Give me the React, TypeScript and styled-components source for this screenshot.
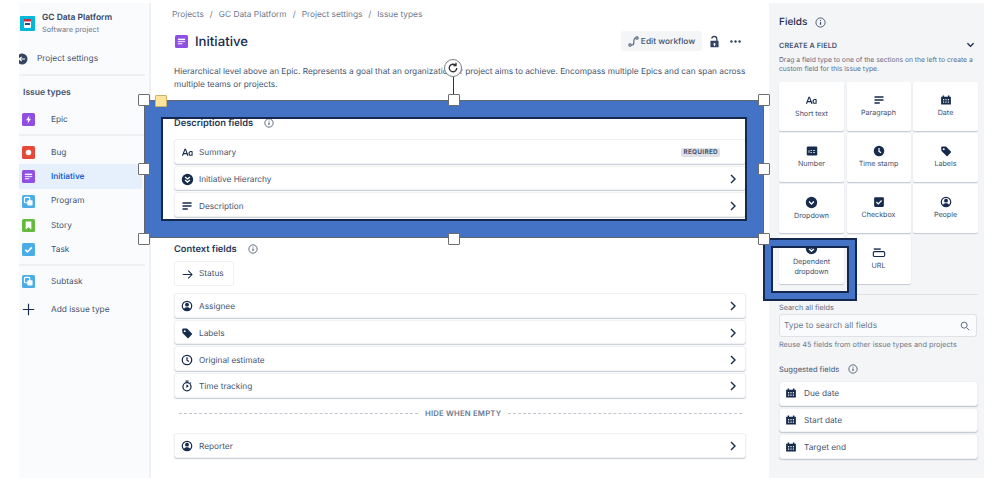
import React from "react";
import styled, { createGlobalStyle } from "styled-components";

const navy = "#172b4d";
const Global = createGlobalStyle`
  html, body { margin: 0; padding: 0; background: #fff; }
  body { font-family: Inter, "Noto Sans", "Liberation Sans", sans-serif; color: ${navy}; text-rendering: geometricPrecision; }
  * { box-sizing: border-box; }
`;

const Page = styled.div`
  position: relative; width: 998px; height: 488px; overflow: hidden;
  display: flex; align-items: flex-start; padding: 3px 0 0 19px;
`;
const Sidebar = styled.aside`
  width: 132px; height: 475px; background: #fafbfc; border-right: 2px solid #eff0f3;
  display: flex; flex-direction: column;
`;
const ProjectHead = styled.div`display: flex; align-items: center; gap: 7px; padding: 3px 0 0 1px; height: 37px;`;
const ProjectText = styled.div`display: flex; flex-direction: column; gap: 1px; margin-top: 2px;`;
const ProjectName = styled.div`font-size: 8.45px; font-weight: 600; color: #344563; line-height: 11px;`;
const ProjectSub = styled.div`font-size: 7.3px; color: #6b778c; line-height: 10px;`;
const BackRow = styled.div`display: flex; align-items: center; gap: 9px; height: 20px; margin-top: 8px; padding-top: 1px; font-size: 8.35px; color: #42526e;`;
const Divider = styled.div<{ $top?: number; $bottom?: number }>`
  height: 2px; width: 126px; background: #eff0f3; flex: none;
  margin-top: ${p => p.$top ?? 0}px; margin-bottom: ${p => p.$bottom ?? 0}px;
`;
const SideHeading = styled.div`font-size: 8.6px; font-weight: 600; color: #42526e; padding-left: 4px; height: 14px; line-height: 14px; margin: 10px 0 7px;`;
const SideRow = styled.div<{ $active?: boolean; $h?: number }>`
  display: flex; align-items: center; width: 123px; height: ${p => p.$h ?? 24.3}px; padding: 1px 0 0 3px; flex: none;
  font-size: 8.3px; color: ${p => p.$active ? "#0052cc" : "#42526e"};
  font-weight: ${p => p.$active ? 500 : 400};
  background: ${p => p.$active ? "#e6effc" : "transparent"};
  & > svg { margin-right: 16px; flex: none; }
`;

const Main = styled.main`width: 618px; height: 475px; padding: 0 23px; flex: none;`;
const Crumbs = styled.div`height: 22px; display: flex; align-items: center; gap: 6px; padding-top: 1px; font-size: 8.3px; color: #6b778c; margin-left: -2px;`;
const TitleRow = styled.div`display: flex; align-items: center; height: 20px; margin-top: 6px; padding-left: 1px;`;
const Title = styled.h1`margin: 1px 0 0 7px; font-size: 13.2px; font-weight: 500; color: ${navy}; flex: 1;`;
const EditButton = styled.div`
  height: 20px; width: 81px; background: #f4f5f7; border-radius: 3px; display: flex; align-items: center; justify-content: center; gap: 2px;
  padding-top: 1px; font-size: 8.35px; font-weight: 500; color: #42526e;
`;
const Tools = styled.div`display: flex; align-items: center; gap: 8.5px; margin: 0 4px 0 5.5px;`;
const Desc = styled.p`margin: 14px 0 0; font-size: 8.27px; line-height: 13px; color: #42526e; white-space: nowrap;`;
const SectionHead = styled.div<{ $top: number }>`
  display: flex; align-items: center; gap: 11px; height: 20px; margin-top: ${p => p.$top}px; padding-top: 2px;
  font-size: 9.3px; font-weight: 600; color: #253858;
`;
const Rows = styled.div<{ $top: number }>`display: flex; flex-direction: column; gap: 2px; margin-top: ${p => p.$top}px;`;
const FieldRow = styled.div`
  height: 24.7px; background: #fff; border-radius: 3px; border: 1px solid #f0f1f4; box-shadow: 0 1px 1px rgba(9,30,66,.22);
  display: flex; align-items: center; padding: 2px 8px 0 0; font-size: 8.25px; color: #42526e;
`;
const RowIcon = styled.span`width: 24px; display: flex; justify-content: center; flex: none;`;
const RowLabel = styled.span`flex: 1;`;
const Required = styled.span`
  background: #dfe1e6; color: #42526e; font-size: 6.4px; font-weight: 700; letter-spacing: .3px; border-radius: 2px;
  padding: 1px 2px; margin-right: 17px; line-height: 7px;
`;
const StatusBox = styled.div`
  width: 60px; height: 25px; margin-top: 3px; border: 1px solid #f0f1f4; border-radius: 3px; display: flex; align-items: center;
  gap: 6px; padding: 1px 0 0 7px; font-size: 8.3px; color: #42526e;
`;
const HideRow = styled.div`display: flex; align-items: center; gap: 7px; height: 12px; margin: 9px 4px 14px 5px; padding-top: 1px; font-size: 7.7px; font-weight: 600; color: #6b778c; letter-spacing: .2px;`;
const Dash = styled.div<{ $w?: number }>`
  flex: ${p => p.$w ? `0 0 ${p.$w}px` : 1}; border-top: 1px dashed #c1c7d0;
`;

const Panel = styled.section`width: 215px; height: 475px; background: #f4f5f7; padding: 0 6px 0 10px; flex: none;`;
const PanelTitle = styled.div`display: flex; align-items: center; gap: 8px; height: 16px; margin-top: 11px; font-size: 10px; font-weight: 500; color: #172b4d;`;
const CreateRow = styled.div`display: flex; align-items: center; justify-content: space-between; height: 12px; margin-top: 9px; padding-right: 3px; font-size: 7.2px; font-weight: 600; color: #42526e; letter-spacing: .1px;`;
const PanelNote = styled.div`margin-top: 5px; font-size: 6.76px; line-height: 8.5px; color: #5e6c84; white-space: nowrap;`;
const Tiles = styled.div`display: grid; grid-template-columns: 65px 64px 65px; grid-auto-rows: 49px; gap: 2px 2.5px; margin-top: 9px;`;
const Tile = styled.div<{ $tall?: boolean }>`
  background: #fff; border-radius: 2px; box-shadow: 0 1px 1px rgba(9,30,66,.2);
  display: flex; flex-direction: column; align-items: center; justify-content: flex-start; padding-top: ${p => p.$tall ? 7 : 12}px;
  font-size: 7.15px; line-height: 10px; color: #42526e; text-align: center; white-space: pre-line;
  & > svg { margin-bottom: 2px; flex: none; }
`;
const PanelRule = styled.div`height: 1px; background: #dfe1e6; margin-top: 10px;`;
const SearchLabel = styled.div`font-size: 7.3px; color: #5e6c84; margin-top: 8px; line-height: 10px;`;
const SearchBox = styled.div`
  height: 23px; margin-top: 1px; width: 198px; background: #fafbfc; border: 1px solid #dfe1e6; border-radius: 3px;
  display: flex; align-items: center; justify-content: space-between; padding: 0 6px 0 4px; font-size: 8.3px; color: #6b778c;
`;
const SearchHint = styled.div`font-size: 7.3px; color: #6b778c; margin-top: 3px; line-height: 10px;`;
const SuggestHead = styled.div`display: flex; align-items: center; gap: 9px; height: 12px; margin-top: 13px; font-size: 7.5px; font-weight: 500; color: #5e6c84;`;
const SuggestRows = styled.div`display: flex; flex-direction: column; gap: 2px; margin-top: 6px;`;
const SuggestRow = styled.div`
  height: 24.7px; background: #fff; border-radius: 3px; box-shadow: 0 1px 1px rgba(9,30,66,.22); border: 1px solid #f0f1f4;
  display: flex; align-items: center; gap: 7px; padding: 0 0 0 5px; font-size: 8.25px; color: #42526e;
`;

const Frame = styled.div<{ $x: number; $y: number; $w: number; $h: number; $b: number; $edge: string; $edgeW: number }>`
  position: absolute; left: ${p => p.$x}px; top: ${p => p.$y}px; width: ${p => p.$w}px; height: ${p => p.$h}px;
  border: ${p => p.$b}px solid #4472c4;
  outline: ${p => p.$edgeW}px solid ${p => p.$edge};
  outline-offset: ${p => -p.$edgeW}px;
`;
const FrameHole = styled.div`position: absolute; inset: 0; border: 2px solid #14284f;`;
const Handle = styled.div<{ $x: number; $y: number; $yellow?: boolean }>`
  position: absolute; left: ${p => p.$x}px; top: ${p => p.$y}px; width: 12px; height: 12px; border-radius: 1px;
  background: ${p => p.$yellow ? "#ffe49b" : "#fff"}; border: 1px solid ${p => p.$yellow ? "#c9b26c" : "#6d6d6d"};
`;
const RotateStem = styled.div`position: absolute; left: 453px; top: 76px; width: 1px; height: 19px; background: #333;`;
const RotateKnob = styled.div`
  position: absolute; left: 444px; top: 59px; width: 18px; height: 18px; border-radius: 50%; background: #fff; border: 1px solid #808080;
  display: flex; align-items: center; justify-content: center;
`;

/* ---------- icons ---------- */
const Svg = ({ s = 12, v = 16, c = navy, children }: { s?: number; v?: number; c?: string; children: React.ReactNode }) => (
  <svg width={s} height={s} viewBox={`0 0 ${v} ${v}`} fill={c}>{children}</svg>
);
const TypeIcon = ({ bg, children, s = 13 }: { bg: string; children: React.ReactNode; s?: number }) => (
  <svg width={s} height={s} viewBox="0 0 16 16">
    <rect width="16" height="16" rx="2" fill={bg} />
    {children}
  </svg>
);
const Epic = () => <TypeIcon bg="#904ee2"><path d="M9 3 5 9h2.5L7 13l4-6H8.5z" fill="#fff" /></TypeIcon>;
const Bug = () => <TypeIcon bg="#e5493a"><circle cx="8" cy="8" r="3.4" fill="#fff" /></TypeIcon>;
const InitIcon = ({ s = 13 }: { s?: number }) => (
  <TypeIcon bg="#904ee2" s={s}><rect x="3.5" y="4.5" width="9" height="1.6" fill="#fff" /><rect x="3.5" y="7.2" width="9" height="1.6" fill="#e6d6fa" /><rect x="3.5" y="9.9" width="5.5" height="1.6" fill="#e6d6fa" /></TypeIcon>
);
const Program = () => <TypeIcon bg="#4bade8"><rect x="3" y="3" width="6.5" height="6.5" rx="1" fill="none" stroke="#fff" strokeWidth="1.4" /><rect x="6.5" y="6.5" width="6.5" height="6.5" rx="1" fill="#fff" /></TypeIcon>;
const Story = () => <TypeIcon bg="#63ba3c"><path d="M4.5 3h7v10L8 10.2 4.5 13z" fill="#fff" /></TypeIcon>;
const Task = () => <TypeIcon bg="#4bade8"><path d="m4 8.3 2.7 2.7L12 5.4" fill="none" stroke="#fff" strokeWidth="2" /></TypeIcon>;

const Chevron = () => <svg width="8" height="10" viewBox="0 0 8 10" fill="none" stroke={navy} strokeWidth="1.4"><path d="m2 1 4 4-4 4" /></svg>;
const Info = ({ s = 10, c = "#42526e" }: { s?: number; c?: string }) => (
  <svg width={s} height={s} viewBox="0 0 12 12" fill="none" stroke={c} strokeWidth="1"><circle cx="6" cy="6" r="5" /><path d="M6 5.4v3M6 3.2v1.1" strokeWidth="1.3" /></svg>
);
const Aa = () => <Svg s={13} v={16}><path d="M1 12 4.4 3.5h1.6L9.3 12H7.7L7 10H3.3l-.7 2zM3.8 8.7h2.8L5.2 4.9z" /><path d="M13 6.2c-2-.6-3.8.6-3.8 3 0 2.5 2 3.4 3.8 2.4V12h1.3V6.4zm0 4.3c-1.2.7-2.4.1-2.4-1.3s1.2-2.2 2.4-1.8z" /></Svg>;
const Para = () => <Svg s={12} v={16}><rect x="2" y="3" width="12" height="2" /><rect x="2" y="7" width="12" height="2" /><rect x="2" y="11" width="7" height="2" /></Svg>;
const DropCircle = ({ double }: { double?: boolean }) => (
  <Svg s={13} v={16}><circle cx="8" cy="8" r="7" />
    <path d={double ? "m5 4.8 3 2.6 3-2.6M5 8.6l3 2.6 3-2.6" : "m5 6.8 3 3 3-3"} fill="none" stroke="#fff" strokeWidth="1.6" />
  </Svg>
);
const Calendar = () => (
  <Svg s={12} v={16}>
    <path d="M1.5 3.5h2V2h2v1.5h5V2h2v1.5h2V14h-13z" />
    <g fill="#fff"><rect x="4" y="6.8" width="1.6" height="1.6" /><rect x="7.2" y="6.8" width="1.6" height="1.6" /><rect x="10.4" y="6.8" width="1.6" height="1.6" /><rect x="4" y="10" width="1.6" height="1.6" /><rect x="7.2" y="10" width="1.6" height="1.6" /><rect x="10.4" y="10" width="1.6" height="1.6" /></g>
  </Svg>
);
const NumberIcon = () => <Svg s={12} v={16}><rect x="1" y="2" width="14" height="12" rx="1.5" /><g fill="#fff"><rect x="3.5" y="7" width="1" height="3.5" /><rect x="6" y="7" width="2" height="1" /><rect x="6" y="9.5" width="2" height="1" /><rect x="9.5" y="7" width="2.5" height="1" /><rect x="9.5" y="9.5" width="2.5" height="1" /></g></Svg>;
const SolidClock = () => <Svg s={12} v={16}><circle cx="8" cy="8" r="7" /><path d="M8 4v4.4l2.8 1.8" fill="none" stroke="#fff" strokeWidth="1.6" /></Svg>;
const Tag = ({ s = 12 }: { s?: number }) => <Svg s={s} v={16}><path d="M1.5 3.5A1.5 1.5 0 0 1 3 2h5l6.5 6.7a1 1 0 0 1 0 1.4l-4.4 4.4a1 1 0 0 1-1.4 0L2 8zM5 4.2a1.3 1.3 0 1 0 0 2.6 1.3 1.3 0 0 0 0-2.6z" fillRule="evenodd" /></Svg>;
const CheckBoxIcon = () => <Svg s={12} v={16}><rect x="1.5" y="1.5" width="13" height="13" rx="1.5" /><path d="m4.5 8 2.5 2.5 4.5-4.5" fill="none" stroke="#fff" strokeWidth="1.6" /></Svg>;
const Person = () => (
  <Svg s={12} v={16}>
    <circle cx="8" cy="8" r="6.3" fill="none" stroke={navy} strokeWidth="1.6" />
    <circle cx="8" cy="6.2" r="2.6" /><path d="M3.6 12.2C4.6 10.3 6 9.6 8 9.6s3.4.7 4.4 2.6C11 14 9.5 14.5 8 14.5s-3-.5-4.4-2.3z" />
  </Svg>
);
const UrlIcon = () => <svg width="14" height="12" viewBox="0 0 16 12" fill="none" stroke={navy} strokeWidth="1.3"><rect x="1.5" y="4.5" width="13" height="5.5" rx="1.3" /><path d="M2 1.5h8" strokeWidth="1.6" /></svg>;
const Clock = () => <svg width="12" height="12" viewBox="0 0 16 16" fill="none" stroke={navy} strokeWidth="1.7"><circle cx="8" cy="8" r="6.3" /><path d="M8 4.4v3.9l2.6 1.6" /></svg>;
const Stopwatch = () => <svg width="12" height="12" viewBox="0 0 16 16" fill="none" stroke={navy} strokeWidth="1.7"><circle cx="8" cy="9" r="5.4" /><path d="M8 6.2V9l1.8-1.4M6 1.6h4M12 3.6l1 1" /></svg>;
const Arrow = () => <svg width="11" height="11" viewBox="0 0 16 16" fill="none" stroke={navy} strokeWidth="1.5"><path d="M1 8h13.5M9 2.5 14.5 8 9 13.5" /></svg>;
const Flow = () => <svg width="11" height="11" viewBox="0 0 16 16" fill="none" stroke="#42526e" strokeWidth="1.5"><circle cx="3" cy="13" r="1.8" /><circle cx="13" cy="3" r="1.8" /><path d="M5 13h1.5c2 0 2-2 2-4s0-6 2.5-6" /></svg>;
const Lock = () => <Svg s={13} v={16} c="#344563"><path d="M3 7h7V5a2.3 2.3 0 0 0-4.5-.6H3.8A3.9 3.9 0 0 1 11.6 5v2H13v8H3zm5 2.8a1.3 1.3 0 0 0-.7 2.4V13.5h1.4v-1.3A1.3 1.3 0 0 0 8 9.8z" fillRule="evenodd" /></Svg>;
const Dots = () => <Svg s={13} v={16} c="#344563"><circle cx="3" cy="8" r="1.5" /><circle cx="8" cy="8" r="1.5" /><circle cx="13" cy="8" r="1.5" /></Svg>;
const Search = () => <svg width="10" height="10" viewBox="0 0 12 12" fill="none" stroke="#5e6c84" strokeWidth="1.2"><circle cx="5" cy="5" r="3.6" /><path d="m8 8 3 3" /></svg>;
const ChevronDown = () => <svg width="9" height="7" viewBox="0 0 10 8" fill="none" stroke={navy} strokeWidth="1.6"><path d="m1.5 1.5 3.5 3.5 3.5-3.5" /></svg>;
const Plus = () => <svg width="13" height="13" viewBox="0 0 16 16" stroke={navy} strokeWidth="1.4"><path d="M8 1v14M1 8h14" /></svg>;
const Logo = () => (
  <svg width="15" height="15" viewBox="0 0 15 15"><rect width="15" height="15" rx="1" fill="#00b8d9" /><rect x="4" y="3" width="7" height="9" rx="1" fill="#fff" /><rect x="4" y="3" width="7" height="2.5" fill="#d6293e" /><rect x="5" y="7" width="5" height="2" fill="#1d4f91" /></svg>
);
const BackCircle = () => (
  <svg width="9" height="12" viewBox="3 0 9 12"><circle cx="6" cy="6" r="5.5" fill="#344563" /><path d="M9 6H3.6M5.6 3.8 3.4 6l2.2 2.2" fill="none" stroke="#fff" strokeWidth="1.1" /></svg>
);
const Rotate = () => <svg width="12" height="12" viewBox="0 0 16 16" fill="none" stroke="#333" strokeWidth="1.8"><path d="M13 8a5 5 0 1 1-1.6-3.7M12 1v3.6H8.4" /></svg>;

const issueRows = [
  { n: "Bug", i: <Bug /> },
  { n: "Initiative", i: <InitIcon />, a: true },
  { n: "Program", i: <Program /> },
  { n: "Story", i: <Story /> },
  { n: "Task", i: <Task /> },
];

const tiles: { n: string; i: React.ReactNode; tall?: boolean }[] = [
  { n: "Short text", i: <Aa /> }, { n: "Paragraph", i: <Para /> }, { n: "Date", i: <Calendar /> },
  { n: "Number", i: <NumberIcon /> }, { n: "Time stamp", i: <SolidClock /> }, { n: "Labels", i: <Tag /> },
  { n: "Dropdown", i: <DropCircle /> }, { n: "Checkbox", i: <CheckBoxIcon /> }, { n: "People", i: <Person /> },
  { n: "Dependent\ndropdown", i: <DropCircle double />, tall: true }, { n: "URL", i: <UrlIcon /> },
];

const contextRows = [
  { n: "Assignee", i: <Person /> }, { n: "Labels", i: <Tag /> },
  { n: "Original estimate", i: <Clock /> }, { n: "Time tracking", i: <Stopwatch /> },
];

const handles = [[138, 94], [448, 94], [758, 94], [138, 163], [758, 163], [138, 233], [448, 233], [758, 233]];

export default function App() {
  return (
    <Page>
      <Global />
      <Sidebar>
        <ProjectHead>
          <Logo />
          <ProjectText>
            <ProjectName>GC Data Platform</ProjectName>
            <ProjectSub>Software project</ProjectSub>
          </ProjectText>
        </ProjectHead>
        <BackRow><BackCircle />Project settings</BackRow>
        <Divider $top={6} />
        <SideHeading>Issue types</SideHeading>
        <SideRow $h={24}><Epic />Epic</SideRow>
        <Divider $top={3} $bottom={4} />
        {issueRows.map(r => <SideRow key={r.n} $active={r.a}>{r.i}{r.n}</SideRow>)}
        <Divider $top={3} $bottom={3} />
        <SideRow $h={24}><Program />Subtask</SideRow>
        <SideRow $h={32}><Plus />Add issue type</SideRow>
      </Sidebar>

      <Main>
        <Crumbs>
          <span>Projects</span><span>/</span><span>GC Data Platform</span><span>/</span><span>Project settings</span><span>/</span><span>Issue types</span>
        </Crumbs>
        <TitleRow>
          <InitIcon />
          <Title>Initiative</Title>
          <EditButton><Flow />Edit workflow</EditButton>
          <Tools><Lock /><Dots /></Tools>
        </TitleRow>
        <Desc>
          Hierarchical level above an Epic. Represents a goal that an organization or project aims to achieve. Encompass multiple Epics and can span across<br />
          multiple teams or projects.
        </Desc>
        <SectionHead $top={21}>Description fields <Info /></SectionHead>
        <Rows $top={7}>
          <FieldRow><RowIcon><Aa /></RowIcon><RowLabel>Summary</RowLabel><Required>REQUIRED</Required></FieldRow>
          <FieldRow><RowIcon><DropCircle double /></RowIcon><RowLabel>Initiative Hierarchy</RowLabel><Chevron /></FieldRow>
          <FieldRow><RowIcon><Para /></RowIcon><RowLabel>Description</RowLabel><Chevron /></FieldRow>
        </Rows>
        <SectionHead $top={21}>Context fields <Info /></SectionHead>
        <StatusBox><Arrow />Status</StatusBox>
        <Rows $top={7}>
          {contextRows.map(r => <FieldRow key={r.n}><RowIcon>{r.i}</RowIcon><RowLabel>{r.n}</RowLabel><Chevron /></FieldRow>)}
        </Rows>
        <HideRow><Dash $w={239} />HIDE WHEN EMPTY<Dash /></HideRow>
        <FieldRow><RowIcon><Person /></RowIcon><RowLabel>Reporter</RowLabel><Chevron /></FieldRow>
      </Main>

      <Panel>
        <PanelTitle>Fields <Info s={11} /></PanelTitle>
        <CreateRow>CREATE A FIELD<ChevronDown /></CreateRow>
        <PanelNote>Drag a field type to one of the sections on the left to create a<br />custom field for this issue type.</PanelNote>
        <Tiles>
          {tiles.map(t => <Tile key={t.n} $tall={t.tall}>{t.i}{t.n}</Tile>)}
        </Tiles>
        <PanelRule />
        <SearchLabel>Search all fields</SearchLabel>
        <SearchBox>Type to search all fields<Search /></SearchBox>
        <SearchHint>Reuse 45 fields from other issue types and projects</SearchHint>
        <SuggestHead>Suggested fields <Info /></SuggestHead>
        <SuggestRows>
          {["Due date", "Start date", "Target end"].map(n => <SuggestRow key={n}><Calendar />{n}</SuggestRow>)}
        </SuggestRows>
      </Panel>

      <Frame $x={144} $y={100} $w={620} $h={138} $b={17} $edge="#5f6670" $edgeW={1}><FrameHole /></Frame>
      <Frame $x={763} $y={238} $w={94} $h={63} $b={8} $edge="#14284f" $edgeW={2}><FrameHole /></Frame>
      <RotateStem />
      <RotateKnob><Rotate /></RotateKnob>
      {handles.map(([x, y]) => <Handle key={`${x}-${y}`} $x={x} $y={y} />)}
      <Handle $x={155} $y={95} $yellow />
    </Page>
  );
}
